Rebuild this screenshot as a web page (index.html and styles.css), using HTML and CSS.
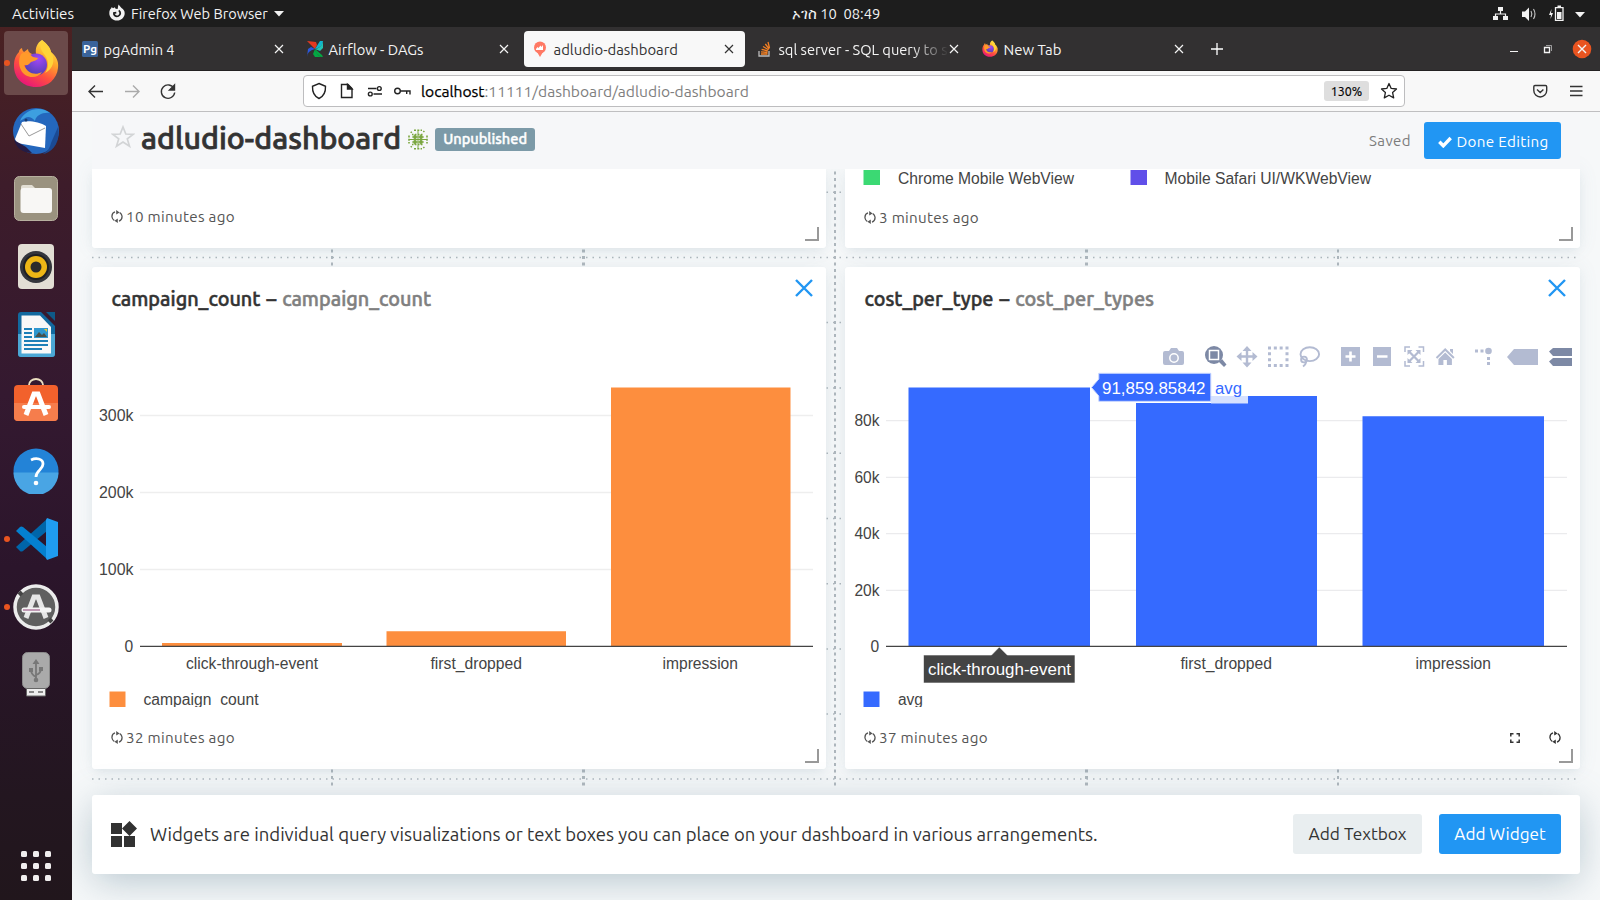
FILE: index.html
```html
<!DOCTYPE html>
<html lang="en">
<head>
<meta charset="utf-8">
<title>adludio-dashboard</title>
<link rel="stylesheet" href="styles.css">
</head>
<body>
<svg class="defs" width="0" height="0">
  <defs>
    <linearGradient id="ffFlame" x1=".8" y1="0" x2=".25" y2="1"><stop offset="0" stop-color="#fff44f"/><stop offset=".35" stop-color="#ffa72b"/><stop offset=".65" stop-color="#ff4f3f"/><stop offset="1" stop-color="#e6107f"/></linearGradient>
    <radialGradient id="ffGlobe" cx=".6" cy=".25" r=".8"><stop offset="0" stop-color="#a347f5"/><stop offset="1" stop-color="#4a3fb0"/></radialGradient>
    <symbol id="firefox" viewBox="0 0 46 48">
      <path fill="url(#ffFlame)" d="M29 1c5 4 8 7 9 12 5 4 8 9 7 16-1 11-10 19-22 19C10 48 1 39 1 27c0-7 2-11 5-14 0-2 1-3 3-4 0 2 1 3 2 4l4-3c0 3 2 4 4 5h4c-1-6 1-11 6-14z"/>
      <circle cx="23" cy="25.500" r="11" fill="url(#ffGlobe)"/>
      <path fill="#ff9a2a" d="M8 15c4-3 9 0 12 3l5 1c-1 3-5 3-7 4-2 2-3 4-7 3 3 8 11 11 18 7-4 7-17 7-21-2-3-6-2-12 0-16z"/>
      <path fill="#ffd43a" d="M29 1c-3 6-1 10 2 14 4 5 6 12 1 19 8-4 11-13 6-21-1-5-5-8-9-12z"/>
    </symbol>
    <symbol id="refresh" viewBox="0 0 12 13">
      <path fill="none" stroke="currentColor" stroke-width="1.300" d="M4 1.900C1.500 2.700.8 5 1 7c.2 1.500 1 2.600 2.300 3.500M8 11.100c2.500-.8 3.200-3.100 3-5.100C10.800 4.500 10 3.400 8.700 2.500"/>
      <path fill="currentColor" d="M5.200 0l3.400 2.400-3.400 2.200zM6.800 8.500v4.500L3.400 10.700z"/>
    </symbol>
    <symbol id="close" viewBox="0 0 10 10"><path d="M1 1l8 8M9 1l-8 8" stroke="currentColor" fill="none" stroke-width="1.200"/></symbol>
  </defs>
</svg>

<header class="topbar">
  <span class="fit activities" data-w="62">Activities</span>
  <svg class="appicon" width="16" height="17" viewBox="0 0 16 17"><path fill="#f2f2f2" d="M9.500.5l3 3.500c2 1 3.200 3 3.200 5.200 0 4-3.400 7.300-7.700 7.300S.3 13.200.3 9.200c0-2.500.7-4 2-5l.4-1.200L4 4.200l1.800-.9.8 1.500 2 .2z"/><path fill="none" stroke="#1d1d1d" stroke-width="1.800" d="M9.700 6.500c2 1 2.200 4.400-.3 5.500-2.600 1-4.800-.8-4.500-3l2.400-.3"/></svg>
  <span class="fit appname" data-w="137">Firefox Web Browser</span>
  <svg class="caret" width="10" height="6"><path fill="#f2f2f2" d="M0 0h10L5 5.500z"/></svg>
  <span class="fit clock" data-w="88">ኦገስ 10&nbsp; 08:49</span>
  <svg class="tray" width="100" height="20" viewBox="1490 3 100 20" fill="#f2f2f2">
    <path d="M1498 6h5v4h-5zM1493 15h5v4h-5zM1503 15h5v4h-5z"/><path fill="none" stroke="#f2f2f2" stroke-width="1.200" d="M1500.500 10v3M1495.500 15.500v-2.500h10v2.500"/>
    <path d="M1522 10.500h3l4-4v13.500l-4-4h-3z"/><path fill="none" stroke="#f2f2f2" stroke-width="1.100" d="M1531 10q1.700 3 0 6M1533.500 8q3 5 0 10" opacity=".8"/>
    <path d="M1551.500 8l-2.500 6h2l-.5 4 2.500-6h-2z"/><path fill="none" stroke="#f2f2f2" stroke-width="1.300" d="M1555.500 6.700h7.500v12.600h-7.500z"/><path d="M1557.500 4.500h3.500v2h-3.500zM1557 11h4.500v7h-4.500z"/>
    <path d="M1575 11h10l-5 5.500z"/>
  </svg>
</header>

<div class="desktop">
  <nav class="dock">
    <div class="dock-item active running"><svg width="46" height="48"><use href="#firefox"/></svg></div>
    <div class="dock-item"><svg width="48" height="48" viewBox="0 0 48 48"><circle cx="24" cy="24" r="23" fill="#2467bd"/><path fill="#1b4a94" d="M46 20c3 14-5 26-16 27 5-2 8-6 9-11z"/><path fill="#3d9fe0" d="M8 14C12 3 28-2 38 6c-7-1-14 2-15 8-3-4-7-5-10-3z"/><path fill="#fff" d="M3 32l7-17c6-2 18 0 24 4l-1 22L5 36z"/><path fill="none" stroke="#999" d="M9 17l8 12 16-8"/><path fill="#241c45" d="M2 33l12 7 6 6C10 46 4 40 2 33z"/><circle cx="14" cy="13" r="1.500" fill="#183c70"/></svg></div>
    <div class="dock-item"><svg width="44" height="45" viewBox="0 0 44 45"><rect x=".5" y=".5" width="43" height="44" rx="5" fill="#9a927f" stroke="#b7b09f"/><path fill="#e2ded3" d="M7 11q0-2 2-2h9l3 3v6H7z"/><rect x="6.500" y="12" width="31.500" height="25" rx="3" fill="#f8f7f5"/></svg></div>
    <div class="dock-item"><svg width="36" height="45" viewBox="0 0 36 45"><rect width="36" height="45" rx="4" fill="#e2ded4"/><circle cx="18" cy="23" r="16" fill="#34363c"/><circle cx="18" cy="23" r="13" fill="#1f2024"/><circle cx="18" cy="23" r="11" fill="#edb616"/><circle cx="18" cy="23" r="5.500" fill="#2b2b2b"/></svg></div>
    <div class="dock-item"><svg width="37" height="45" viewBox="0 0 37 45"><path fill="#12699f" d="M3 0h20l14 14v28q0 3-3 3H3q-3 0-3-3V3q0-3 3-3z"/><path fill="#4ba7d5" d="M0 22h37v20q0 3-3 3H3q-3 0-3-3z"/><path fill="#f8f8f8" d="M3.500 3.500H22L33 15v26.500H3.500z"/><path fill="#0e5a88" d="M28 0h9v9z"/><path stroke="#1c7fb8" stroke-width="2" d="M6 17h8M6 21h8M6 25h8M6 29h24M6 33h24M6 37h18"/><path fill="#2e97cf" d="M16 16h14v10H16z"/><path fill="#48524d" d="M17 25l4-5 3 3 2-2 3 4z"/><path fill="#e8c832" d="M26 17h3v3z"/></svg></div>
    <div class="dock-item store"><svg width="46" height="44" viewBox="0 0 46 44"><path fill="none" stroke="#eadfc0" stroke-width="1.800" d="M16 10V7a7 6 0 0 1 14 0v3"/><rect x="1" y="7" width="44" height="36" rx="4" fill="#f2612c"/><path fill="#f67d4c" d="M1 25h44v14q0 4-4 4H5q-4 0-4-4z"/><path fill="none" stroke="#fff" stroke-width="5" d="M13 37l8-21h4l8 21"/><path stroke="#fff" stroke-width="4" stroke-linecap="round" d="M11 29h25"/></svg></div>
    <div class="dock-item"><svg width="46" height="46" viewBox="0 0 46 46"><circle cx="23" cy="23" r="22.500" fill="#2383d7"/><path fill="#49a5e4" d="M.5 24.500h45a22.500 22.500 0 0 1-45 0z"/><path fill="none" stroke="#fff" stroke-width="2.800" d="M18 12c5-2.500 12-1.500 12 4 0 6-7 6-7 13"/><circle cx="23" cy="35" r="2.300" fill="#fff"/></svg></div>
    <div class="dock-item running"><svg width="43" height="42" viewBox="0 0 43 42"><path fill="#0065a9" d="M1 29l4 4q1 1 3 0L32 13V1z"/><path fill="#0480d0" d="M1 13l4-4q1-1 3 0l24 20v12z"/><path fill="#1f9cf0" d="M32 0l11 4v34l-11 4-1-2V2z"/></svg></div>
    <div class="dock-item running"><svg width="46" height="46" viewBox="0 0 46 46"><circle cx="23" cy="23" r="21" fill="#606060" stroke="#ececec" stroke-width="3.500"/><path stroke="#444" stroke-width="4" d="M6 11l3-3M36 38l3-3"/><path fill="none" stroke="#e6e6e6" stroke-width="5" d="M13 34l8-21h4l8 21"/><path stroke="#f4f4f4" stroke-width="5" stroke-linecap="round" d="M11 26h25"/><path stroke="#8c3f75" d="M10 26h17"/></svg></div>
    <div class="dock-item"><svg width="28" height="45" viewBox="0 0 28 45"><rect x=".5" y=".5" width="27" height="36" rx="5" fill="#aaa" stroke="#8b8b8b"/><path fill="#eee" stroke="#666" d="M4.500 36.500h19v7.500h-19z"/><path stroke="#888" stroke-width="2" d="M7 40h5M16 40h5"/><g stroke="#777" stroke-width="1.800" fill="none"><path d="M14 28V11M14 25c-4-2-5-4-5-7M14 23c4-1 5-4 5-7"/></g><path fill="#777" d="M10.500 12L14 7l3.500 5zM7 16h4v4H7zM17 15h4v4h-4z"/><circle cx="14" cy="28" r="2.300" fill="#777"/></svg></div>
    <div class="apps"><i></i><i></i><i></i><i></i><i></i><i></i><i></i><i></i><i></i></div>
  </nav>

  <main class="browser">
    <div class="tabs">
      <div class="tab"><svg class="fav" width="16" height="16"><rect width="16" height="16" rx="1.500" fill="#3a639a"/><text x="1" y="11.500" font-size="11" font-weight="700" fill="#fff" textLength="14" lengthAdjust="spacingAndGlyphs">Pg</text></svg><span class="label"><span class="fit" data-w="71">pgAdmin 4</span></span><svg class="x" width="10" height="10"><use href="#close"/></svg></div>
      <div class="tab"><svg class="fav" width="16" height="16" viewBox="0 0 16 16"><path fill="#e43921" d="M0 0q6 0 8 8Q6 3 0 0l9 1 1 3-2 4z"/><path fill="#11b6cf" d="M16 0q0 6-8 8l5-8z"/><path fill="#22c4b4" d="M16 1v6l-3 3-5-2q6-1 8-7z"/><path fill="#04a843" d="M16 16q-6 0-8-8l7 6zM8 8l-2 5 2 3 7 0Q9 14 8 8z"/><path fill="#2b57dd" d="M0 16q0-6 8-8L4 6 1 8z"/></svg><span class="label"><span class="fit" data-w="95">Airflow - DAGs</span></span><svg class="x" width="10" height="10"><use href="#close"/></svg></div>
      <div class="tab selected"><svg class="fav" width="16" height="16" viewBox="0 0 16 16"><circle cx="8" cy="6.500" r="6" fill="#ff7964"/><path fill="#ff7964" d="M5 11h6l-3 5z"/><path fill="#fff" d="M4 8l1.500-2 1 1 2-2.500 1 1.500 1.500-2v5H4z"/></svg><span class="label"><span class="fit" data-w="124.500">adludio-dashboard</span></span><svg class="x" width="10" height="10"><use href="#close"/></svg></div>
      <div class="tab faded"><svg class="fav" width="16" height="16" viewBox="0 0 16 16"><path fill="none" stroke="#bcbbbb" stroke-width="1.300" d="M2 10v5h10v-5"/><path stroke="#f48024" stroke-width="1.300" d="M4 13h6.500M4 10.800l6.500.7M4.600 8.300l6.200 1.700M6 5.500l5.500 3.300M8.300 3l4 5M11 1l1.500 6"/></svg><span class="label"><span class="fit" data-w="169">sql server - SQL query to s</span></span><svg class="x" width="10" height="10"><use href="#close"/></svg></div>
      <div class="tab"><svg class="fav" width="16" height="17"><use href="#firefox"/></svg><span class="label"><span class="fit" data-w="58">New Tab</span></span><svg class="x" width="10" height="10"><use href="#close"/></svg></div>
      <svg class="plus" width="12" height="12"><path d="M6 0v12M0 6h12" stroke="#fff" stroke-width="1.300"/></svg>
      <svg class="winbtns" width="88" height="24" viewBox="1506 37 88 24" fill="none" stroke="#f4f4f4"><path d="M1510 51.500h8"/><path stroke-width="1.300" d="M1544.500 47.500h5v5h-5z"/><path opacity=".55" d="M1546 45.500h5.500v5.500"/><circle cx="1582" cy="49" r="9.300" fill="#e95420" stroke="none"/><path stroke-width="1.400" d="M1578 45l8 8M1586 45l-8 8"/></svg>
    </div>

    <div class="toolbar">
      <svg class="nav" width="96" height="20" viewBox="84 81 96 20" fill="none" stroke="#333" stroke-width="1.400"><path d="M103 91.500H89.500M95 85.500l-6 6 6 6"/><path stroke="#aaa" d="M125 91.500h13.500M133 85.500l6 6-6 6"/><path d="M174 88.500a6.700 6.700 0 1 0 .7 4"/><path fill="#333" d="M174.500 85v5h-5z"/></svg>
      <div class="urlbar">
        <svg width="104" height="20" viewBox="309 81 104 20" fill="none" stroke="#222" stroke-width="1.400"><path d="M319 83.500l6.500 2.800c.2 5-1.500 10-6.500 12.200-5-2.200-6.700-7.200-6.500-12.200z"/><path d="M341.500 84.500h6.500l4 4v9h-10.500z"/><path fill="#222" d="M347.500 84.500v4.500h4.500z"/><path d="M368 88.500h8.500M373.500 94h8.500"/><circle cx="379.300" cy="88.500" r="1.900"/><circle cx="370.300" cy="94" r="1.900"/><circle cx="397.500" cy="91" r="2.800"/><path d="M400.500 91h9.500v3.500M406.700 91v3"/></svg>
        <span class="fit url" data-w="327.500"><b>localhost</b>:11111/dashboard/adludio-dashboard</span>
        <span class="zoom"><span class="fit" data-w="31.500">130%</span></span>
        <svg width="18" height="18" viewBox="0 0 18 18"><path fill="none" stroke="#222" stroke-width="1.300" stroke-linejoin="round" d="M9 1.500l2.200 4.900 5.300.6-3.900 3.600 1.100 5.300L9 13.200l-4.700 2.700 1.100-5.300L1.500 7l5.300-.6z"/></svg>
      </div>
      <svg class="right" width="52" height="20" viewBox="1532 81 52 20" fill="none" stroke="#333" stroke-width="1.400"><path d="M1535 85.500h10.500q1.200 0 1.200 1.200v3.800a6.400 6.400 0 0 1-12.900 0v-3.800q0-1.200 1.200-1.200zM1537 89.500l3.200 3 3.200-3"/><path stroke-width="1.300" d="M1570 86.500h12.500M1570 91h12.500M1570 95.500h12.500"/></svg>
    </div>

    <section class="page">
      <svg class="gridlines" width="1488" height="690" viewBox="92 112 1488 690" fill="none" stroke="#b0b8be">
        <g stroke-width="1.600" stroke-dasharray="1.500 5">
          <path d="M92 192.300h1488M92 257.500h1488M92 322.500h1488M92 388h1488M92 453.300h1488M92 518.500h1488M92 583.700h1488M92 649h1488M92 714h1488M92 779h1488"/>
        </g>
        <g stroke-width="2" stroke-dasharray="3 3.500"><path d="M332 165V788M835 165V788M1338 165V788"/><path stroke-width="3" d="M583.500 165V788M1086.500 165V788"/></g>
      </svg>
      <div class="dash-head">
        <svg class="star" width="24" height="24" viewBox="0 0 24 24"><path fill="none" stroke="#d2d4d6" stroke-width="1.700" d="M12 2l2.800 7 7.400.3-5.900 4.600 2.200 7.300-6.500-4.200-6.500 4.200 2.200-7.300L1.800 9.300 9.200 9z"/></svg>
        <h1><span class="fit" data-w="260">adludio-dashboard</span></h1>
        <svg class="avatar" width="20" height="21" viewBox="0 0 20 21"><g fill="none" stroke="#7aa63f"><path stroke-width="1.600" stroke-dasharray="2 1.300" d="M6 1.200h8M6 19.800h8M1 6.500v8M19 6.500v8"/><path stroke-width="1.500" stroke-dasharray="1.500 1.500" d="M2.700 3.800l2-1.800M15.300 2l2 1.800M2.700 17.200l2 1.800M15.300 19l2-1.800M4 5.500h12M4 15.500h12"/><path stroke-width="1" d="M10 2v17M1 10.500h18M7 5v11M13 5v11M4 8h12M4 13h12"/></g><g fill="#7aa63f"><circle cx="7" cy="8" r="1.900"/><circle cx="13" cy="8" r="1.900"/><circle cx="7" cy="13" r="1.900"/><circle cx="13" cy="13" r="1.900"/></g></svg>
        <span class="badge"><span class="fit" data-w="84">Unpublished</span></span>
        <span class="saved"><span class="fit track" data-w="42">Saved</span></span>
        <button class="btn primary done"><svg width="14" height="12" viewBox="0 0 14 12"><path fill="none" stroke="#fff" stroke-width="3.400" d="M1.300 5.800l4 4L12.700 2"/></svg><span class="fit track" data-w="92">Done Editing</span></button>
      </div>

      <div class="cards">
        <article class="card top">
          <div class="foot"><svg width="12" height="13"><use href="#refresh"/></svg><span class="fit track" data-w="109">10 minutes ago</span></div>
          <i class="handle"></i>
        </article>
        <article class="card top">
          <svg class="chart" width="735" height="19" viewBox="845 169 735 19" fill="#444">
            <path fill="#3bd973" d="M863.500 170h16.500v15h-16.500z"/><text x="898" y="184" textLength="176" lengthAdjust="spacingAndGlyphs">Chrome Mobile WebView</text>
            <path fill="#604fe9" d="M1130.500 170h16.500v15h-16.500z"/><text x="1164.500" y="184" textLength="206.500" lengthAdjust="spacingAndGlyphs">Mobile Safari UI/WKWebView</text>
          </svg>
          <div class="foot"><svg width="12" height="13"><use href="#refresh"/></svg><span class="fit track" data-w="100">3 minutes ago</span></div>
          <i class="handle"></i>
        </article>

        <article class="card left">
          <div class="title"><span class="fit" data-w="149">campaign_count</span><span>–</span><span class="fit muted" data-w="149">campaign_count</span><svg class="remove" width="20" height="20"><use href="#close"/></svg></div>
          <svg class="chart" width="734" height="390" viewBox="92 317 734 390" fill="#444">
            <path stroke="#eee" stroke-width="1.300" d="M140 415.500h673M140 492.500h673M140 569.500h673"/>
            <path fill="#fd8e3e" d="M162 643h180v3.500h-180zM386.500 631.300h179.500v15h-179.500zM611 387.500h179.500v259h-179.500z"/>
            <path stroke="#444" stroke-width="1.300" d="M140 646.300h673"/>
            <text x="99" y="421" textLength="34.500" lengthAdjust="spacingAndGlyphs">300k</text>
            <text x="99" y="498" textLength="34.500" lengthAdjust="spacingAndGlyphs">200k</text>
            <text x="99" y="575" textLength="34.500" lengthAdjust="spacingAndGlyphs">100k</text>
            <text x="124.500" y="652">0</text>
            <text x="186" y="669" textLength="132" lengthAdjust="spacingAndGlyphs">click-through-event</text>
            <text x="430.500" y="669" textLength="91.500" lengthAdjust="spacingAndGlyphs">first_dropped</text>
            <text x="662.500" y="669" textLength="75.500" lengthAdjust="spacingAndGlyphs">impression</text>
            <path fill="#fd8e3e" d="M109.500 691.500h16v16h-16z"/>
            <text x="143.500" y="705" textLength="115" lengthAdjust="spacingAndGlyphs">campaign_count</text>
          </svg>
          <div class="foot"><svg width="12" height="13"><use href="#refresh"/></svg><span class="fit track" data-w="109">32 minutes ago</span></div>
          <i class="handle low"></i>
        </article>

        <article class="card">
          <div class="title"><span class="fit" data-w="129">cost_per_type</span><span>–</span><span class="fit muted" data-w="139">cost_per_types</span><svg class="remove" width="20" height="20"><use href="#close"/></svg></div>
          <svg class="chart" width="735" height="390" viewBox="845 317 735 390" fill="#444">
            <g fill="#b3bbd2">
              <path d="M1165 351h4l2-3h6l2 3h3q2 0 2 2v10q0 2-2 2h-17q-2 0-2-2v-10q0-2 2-2z"/><circle cx="1174" cy="358" r="4.200" fill="none" stroke="#fff" stroke-width="1.500"/>
              <g fill="#7d89a5"><circle cx="1214" cy="355" r="9"/><path d="M1219 362l3-3 4.500 5.500-2.500 2.500z"/></g><path fill="none" stroke="#fff" stroke-width="1.500" d="M1209.500 350.500h9v9h-9z"/>
              <path d="M1247 346l4.500 5h-3.300v4.300h4.300v-3.300l5 4.500-5 4.500v-3.300h-4.300v4.800h3.300l-4.500 5-4.500-5h3.300v-4.800h-4.300v3.300l-5-4.500 5-4.500v3.300h4.300v-4.300h-3.300z"/>
              <path fill="none" stroke="#b3bbd2" stroke-width="3" stroke-dasharray="3 2.830" d="M1268 348h20.500M1268 365.500h20.500M1269.500 346.500v20M1287 346.500v20"/>
              <g fill="none" stroke="#b3bbd2" stroke-width="1.900"><ellipse cx="1309.800" cy="354.200" rx="9.300" ry="6.900"/><circle cx="1304" cy="359.500" r="2.900"/><path d="M1306 361.500q0 3-3 5"/></g>
              <path d="M1341 347h19v19h-19zM1373 347h18v19h-18z"/><path stroke="#fff" stroke-width="2.600" d="M1345.500 356.500h10M1350.500 351.500v10M1377 356.500h10.500"/>
              <g fill="none" stroke="#b3bbd2" stroke-width="1.500"><path d="M1405 352v-5h5M1418.500 347h5v5M1423.500 361v5h-5M1410 366h-5v-5"/><path stroke-width="2.200" d="M1408.500 351l11 11M1419.500 351l-11 11"/></g><path d="M1407.500 350h5l-5 5zM1420.500 350v5l-5-5zM1420.500 363h-5l5-5zM1407.500 363v-5l5 5z"/>
              <path fill="none" stroke="#b3bbd2" stroke-width="2" d="M1436.500 358l8.700-8.500 8.700 8.500"/><path d="M1450 349h3v5l-3-3zM1438.500 359l6.700-6.500 6.700 6.500v6h-5v-5h-3.500v5h-5z"/>
              <path d="M1475 349.500h3v3h-3zM1480.500 349.500h3v3h-3zM1487 357h3v3h-3zM1487 362h3v3h-3z"/><circle cx="1488.500" cy="351" r="3.300"/>
              <path d="M1507 357l7-8h24v16h-24z"/>
              <path fill="#7d89a5" d="M1549 351.500l4-3.500h19v8h-19zM1549 361.500l4-3.500h19v8h-19z"/>
            </g>
            <path stroke="#ebebed" stroke-width="1.300" d="M886 420.700h681M886 477.300h681M886 533.600h681M886 590.300h681"/>
            <path fill="#356aff" d="M908.500 387.500h181.500v259h-181.500zM1136 396h181v250.500h-181zM1362.500 416.300h181.500v230.200h-181.500z"/>
            <path stroke="#444" stroke-width="1.300" d="M886 646.300h681"/>
            <text x="854.500" y="426" textLength="25" lengthAdjust="spacingAndGlyphs">80k</text>
            <text x="854.500" y="483" textLength="25" lengthAdjust="spacingAndGlyphs">60k</text>
            <text x="854.500" y="539" textLength="25" lengthAdjust="spacingAndGlyphs">40k</text>
            <text x="854.500" y="596" textLength="25" lengthAdjust="spacingAndGlyphs">20k</text>
            <text x="870.500" y="652">0</text>
            <text x="1180.500" y="669" textLength="91.500" lengthAdjust="spacingAndGlyphs">first_dropped</text>
            <text x="1415.500" y="669" textLength="75.500" lengthAdjust="spacingAndGlyphs">impression</text>
            <path fill="#356aff" d="M863.500 691.500h16v16h-16z"/>
            <text x="898" y="705" textLength="25" lengthAdjust="spacingAndGlyphs">avg</text>
            <path fill="#fff" d="M1098 400h113v3h-113z"/>
            <path fill="#fff" opacity=".8" d="M1211 373h37v30.500h-37z"/>
            <path fill="#356aff" stroke="#c9d6ff" d="M1091.500 387.500l7.300-8.500v-5.700h112v28h-112v-5.300z"/>
            <g font-size="16.900"><text x="1102" y="394" fill="#fff" textLength="103.500" lengthAdjust="spacingAndGlyphs">91,859.85842</text>
            <text x="1215" y="394" fill="#356aff" textLength="27" lengthAdjust="spacingAndGlyphs">avg</text>
            <path fill="#444" stroke="#fff" stroke-width=".6" d="M999.300 647l8 8h67.700v28h-151.500v-28h68z"/>
            <text x="928" y="675" fill="#fff" textLength="143" lengthAdjust="spacingAndGlyphs">click-through-event</text></g>
          </svg>
          <div class="foot"><svg width="12" height="13"><use href="#refresh"/></svg><span class="fit track" data-w="109">37 minutes ago</span>
            <svg class="expand" width="10" height="10" viewBox="0 0 10 10"><path fill="none" stroke="#333" stroke-width="1.500" d="M.8 3.500V.8h2.700M6.500.8h2.700v2.700M9.200 6.500v2.700H6.500M3.500 9.200H.8V6.500"/></svg>
            <svg class="reload" width="12" height="13"><use href="#refresh"/></svg></div>
          <i class="handle low"></i>
        </article>
      </div>

      <div class="addbar">
        <svg width="26" height="26" viewBox="0 0 26 26" fill="#323232"><path d="M0 2h11v11H0zM0 15h11v11H0zM13 15h11v11H13zM18.500 0L26 7.500 18.500 15 11 7.500z"/></svg>
        <span class="fit text" data-w="948">Widgets are individual query visualizations or text boxes you can place on your dashboard in various arrangements.</span>
        <button class="btn light"><span class="fit" data-w="98">Add Textbox</span></button>
        <button class="btn primary"><span class="fit" data-w="91.500">Add Widget</span></button>
      </div>
    </section>
  </main>
</div>
<script src="fit.js"></script>
</body>
</html>
```
FILE: styles.css
```css
* { box-sizing: border-box; }
body { margin: 0; width: 1600px; height: 900px; overflow: hidden; font-family: Ubuntu, "Noto Sans", sans-serif; font-size: 14.500px; background: #f6f8f9; color: #333; }
svg { display: block; flex: none; }
.defs { position: absolute; }
.fit { display: inline-block; white-space: pre; flex: none; }

.topbar { height: 27px; background: #1d1d1d; color: #f2f2f2; display: flex; align-items: center; padding-left: 12px; font-size: 14px; }
.activities { margin-right: 35px; }
.appicon { margin-right: 6px; margin-top: -2px; }
.caret { margin-left: 6px; }
.clock { margin-left: 508px; }
.tray { margin-left: auto; margin-right: 10px; }

.desktop { display: flex; height: 873px; }
.dock { width: 72px; flex: none; padding: 4px 4px 0; display: flex; flex-direction: column; gap: 4px; background: linear-gradient(#4a2122, #3d1c2a 18%, #341930 42%, #2b152b 62%, #231620 88%, #21161c); }
.dock-item { position: relative; height: 64px; display: flex; align-items: center; justify-content: center; border-radius: 4px; padding-bottom: 1px; }
.dock-item.active { background: #6b4a4a; padding-bottom: 0; }
.dock-item.store { padding-bottom: 7px; }
.dock-item.running::before { content: ""; position: absolute; left: 0; top: 29px; width: 6px; height: 6px; border-radius: 50%; background: #e95420; }
.apps { margin: auto auto 19px 17px; display: grid; grid-template-columns: repeat(3, 6px); gap: 6px; }
.apps i { width: 6px; height: 6px; border-radius: 1.500px; background: #f0eeee; }

.browser { flex: 1; min-width: 0; display: flex; flex-direction: column; }
.tabs { height: 44px; background: #323031; border-bottom: 1px solid #232122; display: flex; align-items: center; gap: 4px; padding-left: 2px; color: #f4f4f4; }
.tab { width: 221px; height: 36px; display: flex; align-items: center; padding-left: 8px; padding-right: 11px; border-radius: 4px; flex: none; }
.tab.selected { background: #f8f8f8; color: #333; }
.tab .label { width: 170px; margin-left: 5.500px; margin-right: .5px; white-space: nowrap; line-height: 24px; padding-top: 2px; }
.tab.faded .label { -webkit-mask-image: linear-gradient(90deg, #000 78%, transparent 100%); mask-image: linear-gradient(90deg, #000 78%, transparent 100%); }
.tab .x { flex: none; }
.plus { margin-left: 11.500px; }
.winbtns { margin-left: auto; margin-right: 6px; }

.toolbar { height: 41px; background: #f8f8f8; border-bottom: 1px solid #bfbfc1; display: flex; align-items: center; padding-left: 12px; }
.nav { margin-right: 123px; }
.urlbar { width: 1102px; height: 32px; border: 1px solid #bdbdbf; border-radius: 4px; background: #fff; display: flex; align-items: center; padding-left: 5px; padding-right: 6px; }
.url { color: #7e7e7e; margin-left: 8px; }
.url b { font-weight: 400; color: #000; -webkit-text-stroke: .25px #000; }
.zoom { margin-left: auto; margin-right: 11px; width: 45px; height: 20px; background: #dedede; border-radius: 3px; color: #000; font-size: 12.500px; line-height: 20px; text-align: center; -webkit-text-stroke: .2px #000; }
.right { margin-left: auto; margin-right: 16px; }

.page { position: relative; flex: 1; padding: 0 20px; background: #f6f8f9; overflow: hidden; }
.gridlines { position: absolute; left: 20px; top: 0; }
.dash-head { position: relative; z-index: 2; height: 57px; background: #f6f7f9; display: flex; align-items: flex-start; padding: 10px 19px 0; }
.star { margin-top: 3px; }
h1 { margin: -5px 0 0 6px; font-size: 29.500px; line-height: 42px; font-weight: 500; -webkit-text-stroke: .8px #333; }
.avatar { margin: 7px 7px 0 7px; }
.badge { width: 100px; height: 23px; margin-top: 6px; border-radius: 3px; background: #7c9aa8; color: #fff; font-size: 14px; font-weight: 500; line-height: 22px; text-align: center; -webkit-text-stroke: .4px #fff; }
.saved { margin-left: auto; margin-right: 13px; margin-top: 7px; line-height: 24px; color: #7c7c7c; font-size: 15px; }
.btn { border: 0; border-radius: 3px; padding: 0; font-family: inherit; display: flex; align-items: center; justify-content: center; flex: none; }
.primary { background: #2196f3; color: #fff; }
.light { background: #e9eef0; color: #333; }
.done { width: 137px; height: 37px; gap: 5px; font-size: 15.200px; padding-top: 2px; padding-left: 1px; }

.cards { position: relative; display: grid; grid-template-columns: 734px 735px; grid-template-rows: 79px 502px; gap: 19px; }
.card { position: relative; min-width: 0; background: #fff; border-radius: 3px; box-shadow: 0 4px 9px -3px rgba(102,136,153,.15), 0 0 20px rgba(102,136,153,.09); display: flex; flex-direction: column; }
.card.top { border-radius: 0 0 3px 3px; }
.chart { font-family: "Liberation Sans", Arial, sans-serif; font-size: 15.600px; flex: none; }
.title { height: 50px; display: flex; gap: 6px; padding: 18px 13px 0 19.500px; font-size: 19.500px; line-height: 28px; font-weight: 500; -webkit-text-stroke: .5px currentColor; }
.card.left .title { padding-right: 12px; }
.title .muted { color: #808080; }
.remove { margin-left: auto; margin-top: -7px; color: #2196f3; }
.foot { margin-top: auto; height: 62px; display: flex; align-items: center; padding: 0 19.500px 1px 19px; gap: 3px; color: #555; font-size: 15.200px; }
.foot .expand { margin-left: auto; }
.foot .reload { margin-left: 26px; color: #333; }
.expand { color: #333; }
.handle { position: absolute; right: 7px; bottom: 7px; width: 14px; height: 14px; border-right: 2px solid #999; border-bottom: 2px solid #999; }
.handle.low { bottom: 6px; }

.addbar { position: relative; margin-top: 26px; height: 79px; border-radius: 3px; background: #fff; box-shadow: 0 8px 38px -2px rgba(102,136,153,.45); display: flex; align-items: center; padding: 0 19px 2px; }
.addbar .text { margin-left: 13px; margin-right: auto; font-size: 18px; padding-top: 1px; }
.addbar .btn { height: 40px; font-size: 17px; }
.addbar .light { width: 129px; margin-right: 17px; }
.addbar .primary { width: 122px; }
```
FILE: fit.js
```js
document.querySelectorAll('.fit').forEach(function (el) {
  var target = parseFloat(el.dataset.w);
  if (el.classList.contains('track')) {
    var count = Array.from(el.textContent).length;
    el.style.letterSpacing = ((target - el.getBoundingClientRect().width) / count).toFixed(3) + 'px';
    return;
  }
  for (var pass = 0; pass < 2; pass++) {
    var natural = el.getBoundingClientRect().width;
    var size = parseFloat(getComputedStyle(el).fontSize);
    el.style.fontSize = (size * target / natural).toFixed(3) + 'px';
  }
});
```
